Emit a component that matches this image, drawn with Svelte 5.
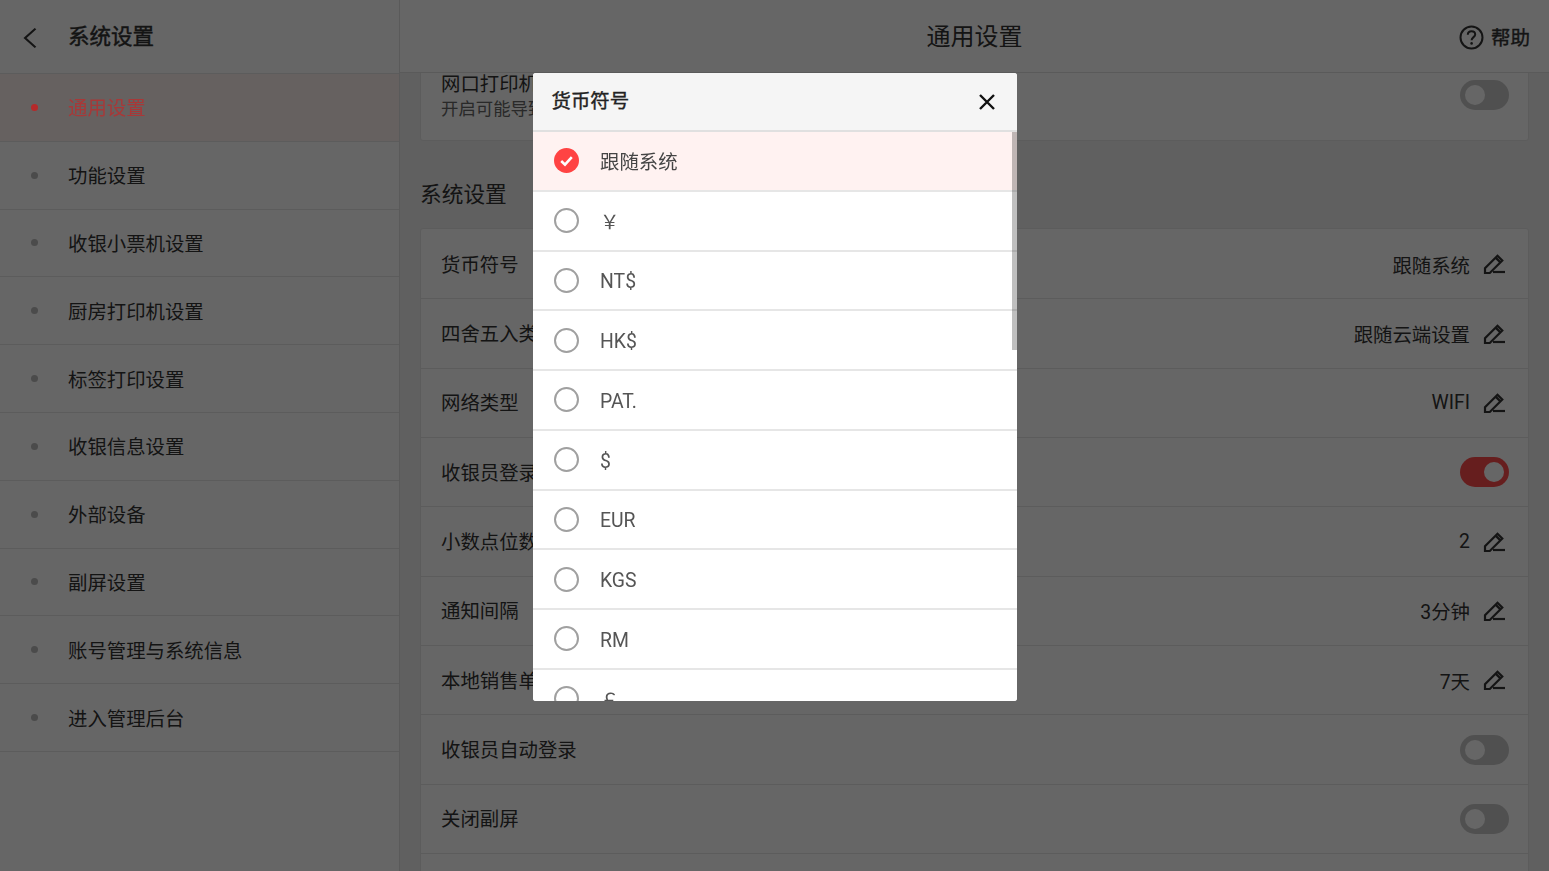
<script>
	const menu = ["通用设置", "功能设置", "收银小票机设置", "厨房打印机设置", "标签打印设置", "收银信息设置", "外部设备", "副屏设置", "账号管理与系统信息", "进入管理后台"];

	const settings = [
		{ label: "货币符号", value: "跟随系统" },
		{ label: "四舍五入类型", value: "跟随云端设置" },
		{ label: "网络类型", value: "WIFI" },
		{ label: "收银员登录验证", on: true },
		{ label: "小数点位数", value: "2" },
		{ label: "通知间隔", value: "3分钟" },
		{ label: "本地销售单保留时间", value: "7天" },
		{ label: "收银员自动登录", on: false },
		{ label: "关闭副屏", on: false },
		{ label: "显示商品图片", on: false }
	];

	const currencies = ["跟随系统", "￥", "NT$", "HK$", "PAT.", "$", "EUR", "KGS", "RM", "￡", "₱"];
	let selected = $state(0);
</script>

<div class="page">
	<aside class="sidebar">
		<div class="sideHead">
			<svg class="back" viewBox="0 0 14 26" width="14" height="22" preserveAspectRatio="none"><path d="M12.5 2 L2 13 L12.5 24" fill="none" stroke="#333" stroke-width="2.2" /></svg>
			<span class="sideTitle">系统设置</span>
		</div>
		{#each menu as item, i}
			<div class="menuItem" class:active={i === 0}>
				<span class="dot"></span>
				<span class="menuLabel">{item}</span>
			</div>
		{/each}
	</aside>

	<main class="main">
		<header class="mainHead">
			<span class="mainTitle">通用设置</span>
			<div class="help">
				<svg viewBox="0 0 25 25" width="25" height="25">
					<circle cx="12.5" cy="12.5" r="11" fill="none" stroke="#333" stroke-width="2" />
					<path d="M8.8 9.8 C8.8 7.6 10.4 6.3 12.5 6.3 C14.6 6.3 16.2 7.7 16.2 9.6 C16.2 12 12.6 12.3 12.6 15.2" fill="none" stroke="#333" stroke-width="2" />
					<circle cx="12.6" cy="18.4" r="1.3" fill="#333" />
				</svg>
				<span class="helpText">帮助</span>
			</div>
		</header>

		<div class="scroll">
			<div class="card first">
				<div class="row tall">
					<div>
						<div class="label">网口打印机兼容模式</div>
						<div class="sub">开启可能导致打印速度变慢</div>
					</div>
					<span class="toggle"></span>
				</div>
			</div>

			<h2 class="section">系统设置</h2>

			<div class="card list2">
				{#each settings as s}
					<div class="row">
						<span class="label">{s.label}</span>
						{#if s.value}
							<div class="value">
								<span>{s.value}</span>
								<svg viewBox="0 0 24 24" width="24" height="24">
									<path d="M3 21 V16.2 L15.5 3.7 L20.3 8.5 L7.8 21 Z M13.6 5.6 L18.4 10.4" fill="none" stroke="#333" stroke-width="2.2" />
									<path d="M11 20 H23" fill="none" stroke="#333" stroke-width="2.2" />
								</svg>
							</div>
						{:else}
							<span class="toggle" class:on={s.on}></span>
						{/if}
					</div>
				{/each}
			</div>
		</div>
	</main>

	<div class="overlay">
		<div class="modal">
			<div class="modalHead">
				<span class="modalTitle">货币符号</span>
				<svg viewBox="0 0 18 18" width="18" height="18"><path d="M2 2 L16 16 M16 2 L2 16" fill="none" stroke="#111" stroke-width="2.4" /></svg>
			</div>
			<div class="list">
				{#each currencies as c, i}
					<button class="option" class:checked={selected === i} onclick={() => (selected = i)}>
						{#if selected === i}
							<svg viewBox="0 0 25 25" width="25" height="25">
								<circle cx="12.5" cy="12.5" r="12.5" fill="#ff4343" />
								<path d="M7.2 13 L11 16.6 L17.8 9.2" fill="none" stroke="#fff" stroke-width="2.6" />
							</svg>
						{:else}
							<span class="radio"></span>
						{/if}
						<span class:latin={c.charCodeAt(0) < 256}>{c}</span>
					</button>
				{/each}
				<span class="thumb"></span>
			</div>
		</div>
	</div>
</div>

<style>
	:global(body) {
		margin: 0;
		font-family: Roboto, "Noto Sans CJK SC", sans-serif;
		color: #333;
	}

	.page {
		display: flex;
		height: 871px;
		overflow: hidden;
		background: #f0f0f0;
	}

	.sidebar {
		width: 399px;
		flex: none;
		background: #fff;
		border-right: 1px solid #e0e0e0;
	}

	.sideHead {
		height: 73px;
		display: flex;
		align-items: center;
		gap: 31px;
		padding-left: 23px;
		border-bottom: 1px solid #e6e6e6;
	}

	.back {
		margin-top: 2px;
	}

	.sideTitle {
		font-size: 21.5px;
		-webkit-text-stroke: 0.45px #333;
		padding-bottom: 4px;
	}

	.menuItem {
		height: 66.8px;
		display: flex;
		align-items: center;
		gap: 30px;
		padding-left: 31px;
		border-bottom: 1px solid #e6e6e6;
		font-size: 19.4px;
	}

	.menuLabel {
		padding-bottom: 1px;
	}

	.dot {
		width: 7px;
		height: 7px;
		border-radius: 50%;
		background: #bbb;
	}

	.menuItem.active {
		background: #fff2f0;
	}

	.menuItem.active .dot {
		background: #b52a2a;
		position: relative;
		z-index: 2;
	}

	.menuItem.active .menuLabel {
		color: #a83838;
		position: relative;
		z-index: 2;
	}

	.main {
		flex: 1;
		min-width: 0;
		display: flex;
		flex-direction: column;
	}

	.mainHead {
		height: 72px;
		flex: none;
		position: relative;
		display: flex;
		align-items: center;
		justify-content: center;
		background: #fff;
		border-bottom: 1px solid #e0e0e0;
	}

	.mainTitle {
		font-size: 24px;
		padding-bottom: 4px;
	}

	.help {
		position: absolute;
		right: 19px;
		top: 22px;
		display: flex;
		align-items: center;
		gap: 7px;
		font-size: 19.5px;
	}

	.helpText {
		-webkit-text-stroke: 0.4px #333;
		padding-bottom: 2px;
	}

	.scroll {
		flex: 1;
		padding: 0 20px;
		overflow: hidden;
	}

	.card {
		background: #fff;
		border: 1px solid #e6e6e6;
		border-radius: 3px;
	}

	.card.first {
		margin-top: -26px;
	}

	.list2 {
		padding-top: 1px;
	}

	.row {
		height: 68.35px;
		display: flex;
		align-items: center;
		justify-content: space-between;
		padding: 0 20px;
		border-bottom: 1px solid #e6e6e6;
		font-size: 19.4px;
	}

	.row:last-child {
		border-bottom: none;
	}

	.row.tall {
		height: 92px;
		align-items: flex-start;
	}

	.tall > div {
		padding-top: 24px;
	}

	.tall .toggle {
		margin-top: 32px;
	}

	.label {
		line-height: 26px;
	}

	.row > .label {
		padding-top: 3px;
	}

	.sub {
		font-size: 17.4px;
		line-height: 24px;
		margin-top: -1px;
		color: #666;
	}

	.section {
		margin: 0;
		padding: 38px 0 17px;
		font-size: 21.7px;
		font-weight: 400;
		line-height: 32px;
	}

	.value {
		display: flex;
		align-items: center;
		gap: 12px;
	}

	.value svg {
		margin-right: 2px;
	}

	.toggle {
		width: 49px;
		height: 30px;
		margin-right: -1px;
		border-radius: 15px;
		background: #c8c8c8;
		position: relative;
		flex: none;
	}

	.toggle::after {
		content: "";
		position: absolute;
		left: 5px;
		top: 5px;
		width: 20px;
		height: 20px;
		border-radius: 50%;
		background: #fff;
	}

	.toggle.on {
		background: #ff4d4d;
	}

	.toggle.on::after {
		left: 24px;
	}

	.overlay {
		position: fixed;
		inset: 0;
		z-index: 1;
		background: rgba(0, 0, 0, 0.6);
		display: flex;
		justify-content: center;
		align-items: flex-start;
		padding-top: 73px;
	}

	.modal {
		width: 484px;
		height: 628px;
		background: #fff;
		border-radius: 3px;
		overflow: hidden;
		display: flex;
		flex-direction: column;
	}

	.modalHead {
		height: 57px;
		flex: none;
		display: flex;
		align-items: center;
		justify-content: space-between;
		padding: 0 20.5px 0 19px;
		background: #f5f5f5;
		border-bottom: 2px solid #e0e0e0;
		font-size: 19.4px;
		color: #222;
	}

	.modalTitle {
		-webkit-text-stroke: 0.4px #222;
		padding-bottom: 4px;
	}

	.list {
		flex: 1;
		position: relative;
		overflow: hidden;
	}

	.option {
		width: 100%;
		height: 59.75px;
		box-sizing: border-box;
		display: flex;
		align-items: center;
		gap: 21.5px;
		padding: 0 0 0 21px;
		background: #fff;
		border: none;
		border-bottom: 2px solid #e6e6e6;
		font: inherit;
		font-size: 19.4px;
		color: #555;
		text-align: left;
	}

	.option.checked {
		background: #fff2f1;
		color: #444;
	}

	.latin {
		padding-top: 3px;
	}

	.radio {
		width: 25px;
		height: 25px;
		box-sizing: border-box;
		border: 2.5px solid #a0a0a0;
		border-radius: 50%;
	}

	.thumb {
		position: absolute;
		right: 0;
		top: 0;
		width: 5px;
		height: 218px;
		background: rgba(0, 0, 0, 0.25);
	}
</style>
